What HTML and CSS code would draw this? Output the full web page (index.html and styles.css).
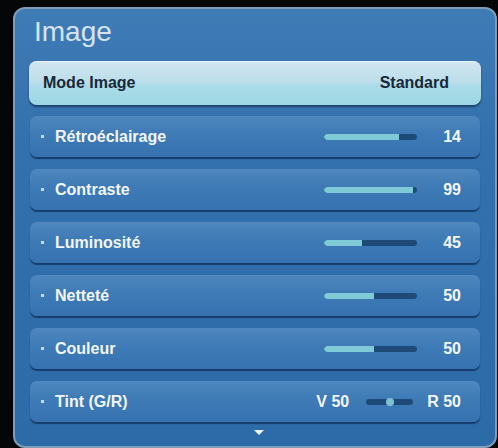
FILE: index.html
```html
<!DOCTYPE html>
<html>
<head>
<meta charset="utf-8">
<link rel="stylesheet" href="styles.css">
</head>
<body>
<div class="panel">
  <div class="title">Image</div>
  <div class="mode-row">
    <span class="mode-label">Mode Image</span>
    <span class="mode-value">Standard</span>
  </div>
  <div class="list">
    <div class="row">
      <span class="dot"></span><span class="label">Rétroéclairage</span>
      <span class="slider"><span class="fill" style="width:75px"></span></span>
      <span class="value">14</span>
    </div>
    <div class="row">
      <span class="dot"></span><span class="label">Contraste</span>
      <span class="slider"><span class="fill" style="width:89px"></span></span>
      <span class="value">99</span>
    </div>
    <div class="row">
      <span class="dot"></span><span class="label">Luminosité</span>
      <span class="slider"><span class="fill" style="width:38px"></span></span>
      <span class="value">45</span>
    </div>
    <div class="row">
      <span class="dot"></span><span class="label">Netteté</span>
      <span class="slider"><span class="fill" style="width:50px"></span></span>
      <span class="value">50</span>
    </div>
    <div class="row">
      <span class="dot"></span><span class="label">Couleur</span>
      <span class="slider"><span class="fill" style="width:50px"></span></span>
      <span class="value">50</span>
    </div>
    <div class="row">
      <span class="dot"></span><span class="label">Tint (G/R)</span>
      <span class="tint-v">V 50</span>
      <span class="tint-slider"><span class="knob"></span></span>
      <span class="tint-r">R 50</span>
    </div>
  </div>
  <div class="more"><span class="arrow"></span></div>
</div>
</body>
</html>
```
FILE: styles.css
```css
html, body {
  margin: 0;
  padding: 0;
  background: #050608;
  width: 498px;
  height: 448px;
  overflow: hidden;
  font-family: "Liberation Sans", Arial, sans-serif;
}
.panel {
  box-sizing: border-box;
  margin: 7px 0 0 13px;
  width: 484px;
  height: 441px;
  border: 2px solid #7f9cb8;
  border-radius: 12px;
  background: linear-gradient(to bottom, #3f7cb6 0%, #3371ae 30%, #2c6aa8 100%);
  padding: 0 14px 0 14px;
  display: flex;
  flex-direction: column;
}
.title {
  padding-top: 7px;
  height: 32px;
  line-height: 32px;
  font-size: 28px;
  color: #d6e3ee;
  margin: 0 0 13px 5px;
}
.mode-row {
  height: 44px;
  box-sizing: border-box;
  border-radius: 8px;
  background: linear-gradient(to bottom, #d2e7f1 0%, #bddeea 45%, #a9dce8 58%, #9ed6e3 100%);
  box-shadow: 0 2px 2px rgba(10, 30, 60, 0.6), inset 0 1px 0 rgba(255, 255, 255, 0.5);
  display: flex;
  align-items: center;
  padding: 0 32px 0 14px;
  font-size: 16px;
  font-weight: bold;
  color: #17283a;
}
.mode-label { flex: 1; }
.list {
  margin: 11px 1px 0 1px;
  display: flex;
  flex-direction: column;
  gap: 12px;
}
.row {
  height: 41px;
  box-sizing: border-box;
  border-radius: 7px;
  background: linear-gradient(to bottom, #5088bf 0%, #3f7bb6 40%, #3672b0 100%);
  box-shadow: 0 2px 1px rgba(18, 50, 95, 0.85);
  display: flex;
  align-items: center;
  padding: 0 19px 0 11px;
  font-size: 16px;
  font-weight: bold;
  color: #f2f6fa;
}
.dot {
  width: 3px;
  height: 3px;
  background: #c9d9e8;
  margin-right: 11px;
  flex: none;
}
.label { flex: 1; }
.slider {
  width: 93px;
  height: 6px;
  border-radius: 3px;
  background: #1e4a7a;
  overflow: hidden;
  display: flex;
  flex: none;
}
.fill {
  height: 6px;
  background: #80c9d6;
  border-radius: 3px 0 0 3px;
}
.value {
  width: 44px;
  text-align: right;
  flex: none;
}
.tint-v { flex: none; }
.tint-slider {
  position: relative;
  width: 47px;
  height: 6px;
  border-radius: 3px;
  background: #1e4a7a;
  margin: 0 14px 0 17px;
  flex: none;
}
.knob {
  position: absolute;
  left: 20px;
  top: -1px;
  width: 8px;
  height: 8px;
  border-radius: 50%;
  background: #7fc0d6;
}
.tint-r { flex: none; }
.more {
  display: flex;
  justify-content: center;
  padding: 8px 0 0 8px;
}
.arrow {
  width: 0;
  height: 0;
  border-left: 5px solid transparent;
  border-right: 5px solid transparent;
  border-top: 5px solid #eef3f8;
}
```
